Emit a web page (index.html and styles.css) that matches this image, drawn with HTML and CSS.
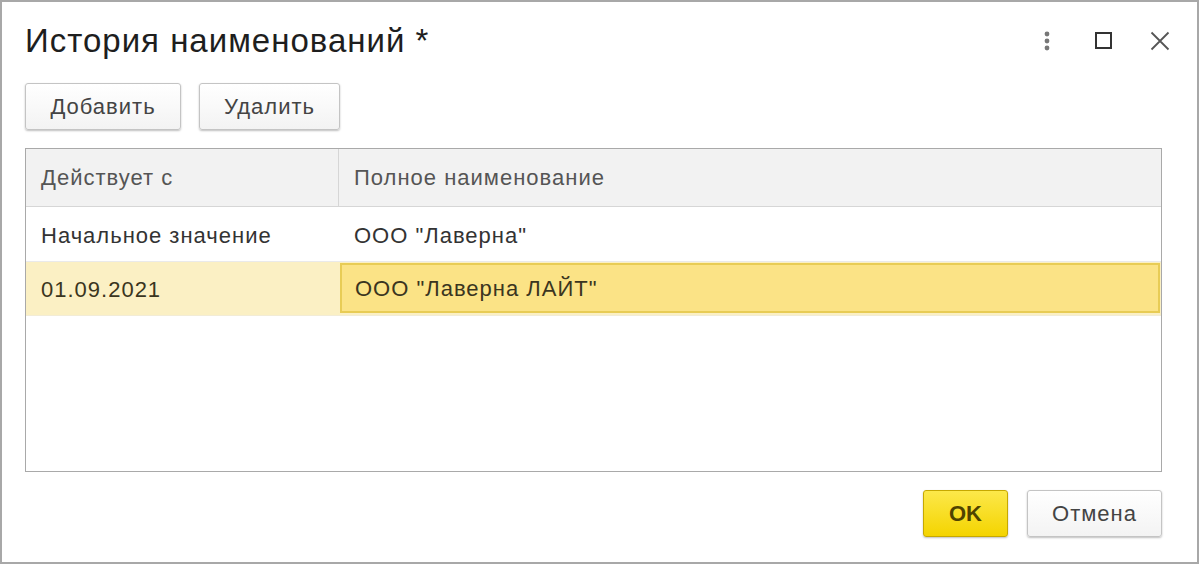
FILE: index.html
```html
<!DOCTYPE html>
<html lang="ru">
<head>
<meta charset="utf-8">
<title>История наименований</title>
<link rel="stylesheet" href="styles.css">
</head>
<body>
<div class="window">
  <div class="titlebar">
    <h1 class="title">История наименований *</h1>
    <div class="win-controls">
      <span class="ctl ctl-more">
        <svg width="10" height="22" viewBox="0 0 10 22"><circle cx="5" cy="4" r="2.4" fill="#777"/><circle cx="5" cy="11" r="2.4" fill="#777"/><circle cx="5" cy="18" r="2.4" fill="#777"/></svg>
      </span>
      <span class="ctl">
        <svg width="18" height="18" viewBox="0 0 18 18"><rect x="1" y="1" width="15" height="15" fill="none" stroke="#333" stroke-width="2"/></svg>
      </span>
      <span class="ctl">
        <svg width="20" height="20" viewBox="0 0 20 20"><path d="M1.5 1.5 L18.5 18.5 M18.5 1.5 L1.5 18.5" stroke="#555" stroke-width="1.8" fill="none"/></svg>
      </span>
    </div>
  </div>
  <div class="toolbar">
    <button class="btn btn-add">Добавить</button>
    <button class="btn btn-del">Удалить</button>
  </div>
  <div class="grid">
    <div class="row head">
      <div class="cell c1">Действует с</div>
      <div class="cell c2">Полное наименование</div>
    </div>
    <div class="row">
      <div class="cell c1">Начальное значение</div>
      <div class="cell c2">ООО "Лаверна"</div>
    </div>
    <div class="row selected">
      <div class="cell c1">01.09.2021</div>
      <div class="cell c2 current">ООО "Лаверна ЛАЙТ"</div>
    </div>
  </div>
  <div class="footer">
    <button class="btn btn-ok">OK</button>
    <button class="btn btn-cancel">Отмена</button>
  </div>
</div>
</body>
</html>
```
FILE: styles.css
```css
html, body {
  margin: 0;
  padding: 0;
  background: #fff;
}
body {
  font-family: "Liberation Sans", Arial, sans-serif;
  color: #333;
}
.window {
  box-sizing: border-box;
  width: 1199px;
  height: 564px;
  border: 2px solid #a8a8a8;
  background: #fff;
  padding: 0 35px 0 23px;
  display: flex;
  flex-direction: column;
}
.titlebar {
  display: flex;
  align-items: center;
  height: 78px;
}
.title {
  margin: 0;
  font-weight: normal;
  font-size: 33px;
  letter-spacing: 1px;
  color: #1e1e1e;
  flex: 1;
}
.win-controls {
  display: flex;
  align-items: center;
  margin-right: -26px;
}
.ctl {
  display: flex;
  align-items: center;
  justify-content: center;
  width: 56px;
  height: 40px;
}
.ctl-more { width: 59px; }
.toolbar {
  display: flex;
  gap: 18px;
  height: 68px;
  align-items: flex-start;
  padding-top: 3px;
  box-sizing: border-box;
}
.btn {
  font-family: "Liberation Sans", Arial, sans-serif;
  font-size: 22px;
  letter-spacing: 1px;
  color: #444;
  border: 1px solid #c4c4c4;
  border-radius: 3px;
  background: linear-gradient(#ffffff, #f3f3f3);
  box-shadow: 0 1px 2px rgba(0,0,0,0.25);
  height: 47px;
  padding: 0;
}
.btn-add { width: 156px; }
.btn-del { width: 141px; }
.grid {
  box-sizing: border-box;
  height: 324px;
  border: 1px solid #a9a9a9;
  width: 1137px;
}
.row {
  display: flex;
  height: 55px;
  border-bottom: 1px solid #eaeaea;
  box-sizing: border-box;
  font-size: 22px;
  letter-spacing: 1px;
  color: #333;
}
.row.head {
  height: 58px;
  background: #f2f2f2;
  border-bottom: 1px solid #d6d6d6;
  color: #555;
}
.cell {
  display: flex;
  align-items: center;
  box-sizing: border-box;
  padding-left: 15px;
}
.row:not(.head) .cell { padding-top: 3px; }
.c1 { width: 313px; }
.c2 { flex: 1; }
.head .c1 { border-right: 1px solid #d6d6d6; }
.row.selected {
  background: #fbf0c4;
  height: 54px;
  border-bottom: 1px solid #f2ecd6;
  color: #3a3520;
}
.row.selected .current {
  background: #fbe386;
  border: 2px solid #e8cc55;
  margin: 1px 1px 2px 1px;
  padding-left: 13px;
  padding-top: 2px;
}
.footer {
  display: flex;
  justify-content: flex-end;
  gap: 19px;
  padding-top: 18px;
}
.btn-ok {
  width: 85px;
  background: linear-gradient(#fce84a, #f4d400);
  border-color: #c6a800;
  color: #4f4300;
  font-weight: bold;
  letter-spacing: 0;
}
.btn-cancel { width: 135px; }
```
